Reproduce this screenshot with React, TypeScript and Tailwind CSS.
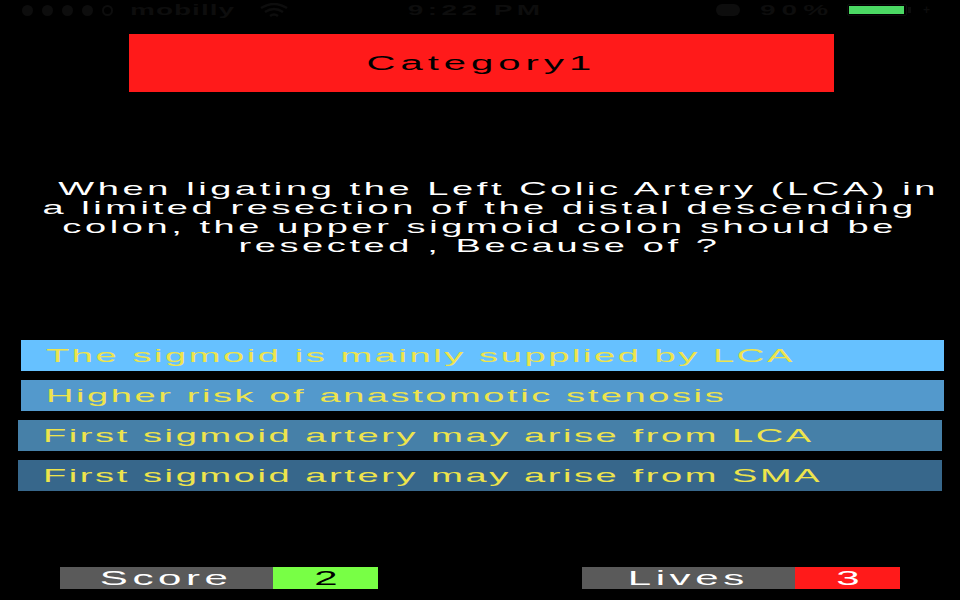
const answers = [
  { text: "The sigmoid is mainly supplied by LCA", bg: "bg-[#66c1ff]", indent: "ml-[21px] w-[923px]" },
  { text: "Higher risk of anastomotic stenosis", bg: "bg-[#5399cc]", indent: "ml-[21px] w-[923px]" },
  { text: "First sigmoid artery may arise from LCA", bg: "bg-[#4680a8]", indent: "ml-[18px] w-[924px]" },
  { text: "First sigmoid artery may arise from SMA", bg: "bg-[#37678b]", indent: "ml-[18px] w-[924px]" },
]

const questionLines = [
  "When ligating the Left Colic Artery (LCA) in",
  "a limited resection of the distal descending",
  "colon, the upper sigmoid colon should be",
  "resected , Because of ?",
]

function Wifi() {
  return (
    <svg width="30" height="14" viewBox="0 0 30 14" fill="none" stroke="#0d0d0d" strokeWidth="2.5">
      <path d="M2 5 Q15 -3 28 5" />
      <path d="M6 9 Q15 3 24 9" />
      <path d="M11 13 Q15 10 19 13" />
    </svg>
  )
}

function StatusBar() {
  return (
    <div className="flex h-5 items-center text-[14px] font-bold text-[#0d0d0d]">
      <div className="flex flex-1 items-center pl-[22px]">
        <div className="flex gap-[9px]">
          {[0, 1, 2, 3].map((i) => (
            <span key={i} className="h-[11px] w-[11px] rounded-full bg-[#0d0d0d]" />
          ))}
          <span className="h-[11px] w-[11px] rounded-full border-2 border-[#0d0d0d]" />
        </div>
        <span className="ml-[17px] inline-block origin-left scale-x-200 tracking-[0.5px]">mobilly</span>
        <span className="ml-[76px]">
          <Wifi />
        </span>
      </div>
      <div className="inline-block origin-center scale-x-200 tracking-[2.2px]">9:22 PM</div>
      <div className="flex flex-1 items-center justify-end pr-[30px]">
        <span className="h-[12px] w-[24px] rounded-full bg-[#0d0d0d]" />
        <span className="ml-[20px] mr-[50px] inline-block origin-left scale-x-200 tracking-[3px]">90%</span>
        <div className="flex h-[12px] w-[60px] items-center rounded-[2px] border border-[#0d0d0d] p-[1px]">
          <div className="h-full w-[55px] bg-[#4cd964]" />
        </div>
        <span className="ml-[1px] h-[6px] w-[3px] bg-[#0d0d0d]" />
        <span className="ml-[12px] text-[12px]">+</span>
      </div>
    </div>
  )
}

function Stat({ label, value, valueBg, valueText }: { label: string; value: string; valueBg: string; valueText: string }) {
  return (
    <div className="flex h-[22px]">
      <div className="flex w-[213px] items-center justify-center bg-[#5a5a5a] text-white">
        <span className="inline-block origin-center scale-x-200 text-[21px] leading-[20px] tracking-[2.3px]">{label}</span>
      </div>
      <div className={`flex w-[105px] items-center justify-center ${valueBg} ${valueText}`}>
        <span className="inline-block origin-center scale-x-200 text-[21px] leading-[20px]">{value}</span>
      </div>
    </div>
  )
}

export default function App() {
  return (
    <div className="flex h-screen w-full flex-col overflow-hidden bg-black font-['Liberation_Sans',Arial,sans-serif]">
      <StatusBar />

      <div className="ml-[129px] mt-[14px] flex h-[58px] w-[705px] items-center justify-center bg-[#ff1a1a]">
        <span className="inline-block origin-center scale-x-200 text-[20px] leading-[20px] tracking-[2.5px] text-black">
          Category1
        </span>
      </div>

      <div className="mt-[87px] flex flex-col items-center text-[19px] leading-[19px] text-white">
        {questionLines.map((line, i) => (
          <div key={line} className={`inline-block origin-center scale-x-200 tracking-[1.8px] ${i === 0 ? "pl-[19px]" : ""}`}>
            {line}
          </div>
        ))}
      </div>

      <div className="mt-[85px] flex flex-col gap-[9px]">
        {answers.map((a) => (
          <div key={a.text} className={`flex h-[31px] items-center pl-[25px] ${a.bg} ${a.indent}`}>
            <span className="inline-block origin-left scale-x-200 text-[19px] leading-[19px] tracking-[1.3px] text-[#eee44c]">
              {a.text}
            </span>
          </div>
        ))}
      </div>

      <div className="mt-[76px] flex pl-[60px]">
        <Stat label="Score" value="2" valueBg="bg-[#78ff45]" valueText="text-black" />
        <div className="ml-[204px]">
          <Stat label="Lives" value="3" valueBg="bg-[#ff1a1a]" valueText="text-white" />
        </div>
      </div>
    </div>
  )
}
